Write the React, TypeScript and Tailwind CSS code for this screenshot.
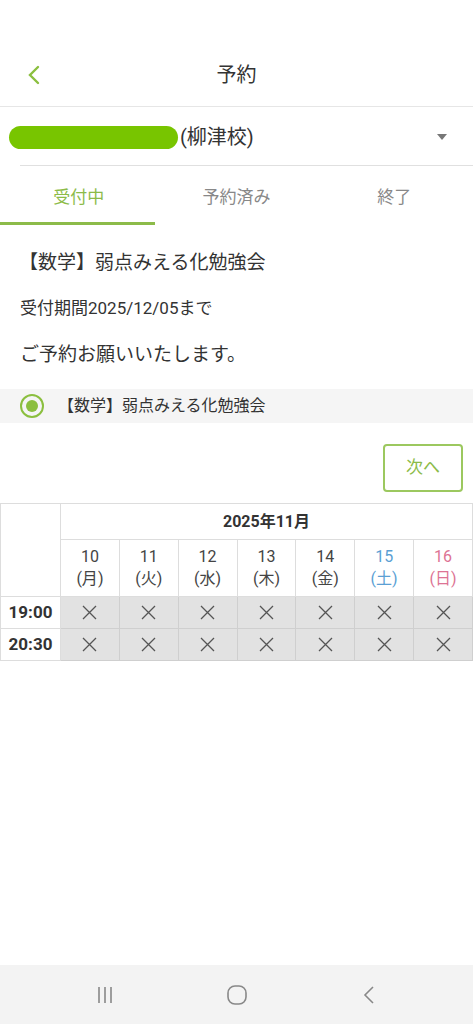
import React from "react";

const days = [
  { d: "10", w: "月", c: "text-[#444]" },
  { d: "11", w: "火", c: "text-[#444]" },
  { d: "12", w: "水", c: "text-[#444]" },
  { d: "13", w: "木", c: "text-[#444]" },
  { d: "14", w: "金", c: "text-[#444]" },
  { d: "15", w: "土", c: "text-[#5b9fd4]" },
  { d: "16", w: "日", c: "text-[#dd7394]" },
];

const times = ["19:00", "20:30"];

function Cross() {
  return (
    <svg width="17" height="17" viewBox="0 0 17 17" className="text-[#555]">
      <path d="M2 2L15 15M15 2L2 15" stroke="currentColor" strokeWidth="1.3" fill="none" />
    </svg>
  );
}

export default function App() {
  return (
    <div
      className="w-[473px] h-[1024px] bg-white flex flex-col text-[#333] overflow-hidden"
      style={{ fontFamily: "Roboto, 'Noto Sans CJK JP', sans-serif" }}
    >
      {/* Header */}
      <header className="h-[107px] flex items-end pb-[10px] border-b border-[#e6e6e6]">
        <div className="w-full h-[42px] flex items-center relative">
          <button className="absolute left-[24px] top-[9px]">
            <svg width="20" height="24" viewBox="0 0 20 24">
              <path d="M14 4L6 12L14 20" stroke="#8bbf3f" strokeWidth="2.4" fill="none" strokeLinecap="round" />
            </svg>
          </button>
          <h1 className="w-full text-center text-[20px] text-[#333]">予約</h1>
        </div>
      </header>

      {/* School selector */}
      <div className="h-[58px] flex items-center pl-[9px] pr-[26px] pt-[2px]">
        <div className="w-[169px] h-[23px] rounded-full bg-[#78c500]" />
        <span className="text-[20px] text-[#333] ml-[2px]">(柳津校)</span>
        <div className="ml-auto w-0 h-0 border-l-[5px] border-r-[5px] border-t-[6px] border-l-transparent border-r-transparent border-t-[#777]" />
      </div>
      <div className="ml-[20px] border-b border-[#e0e0e0]" />

      {/* Tabs */}
      <div className="h-[59px] grid grid-cols-3 text-[17px]">
        <div className="flex flex-col">
          <div className="flex-1 flex items-center justify-center pt-[8px] text-[#8cbb49]">受付中</div>
          <div className="h-[3px] bg-[#8cbb49] w-[155px]" />
        </div>
        <div className="flex items-center justify-center pt-[5px] text-[#888]">予約済み</div>
        <div className="flex items-center justify-center pt-[5px] text-[#888]">終了</div>
      </div>

      {/* Body */}
      <div className="pl-[19px] pt-[24px] text-[19px] leading-[28px]">【数学】弱点みえる化勉強会</div>
      <div className="pl-[20px] pt-[20px] text-[17px] leading-[22px]">受付期間2025/12/05まで</div>
      <div className="pl-[20px] pt-[22px] text-[19px] leading-[28px]">ご予約お願いいたします。</div>

      <div className="mt-[20px] h-[34px] bg-[#f5f5f5] flex items-center pl-[20px]">
        <div className="w-[24px] h-[24px] rounded-full border-2 border-[#8bbf3f] flex items-center justify-center">
          <div className="w-[12px] h-[12px] rounded-full bg-[#8bbf3f]" />
        </div>
        <span className="ml-[14px] text-[16px]">【数学】弱点みえる化勉強会</span>
      </div>

      <div className="flex justify-end pr-[10px] pt-[21px]">
        <button className="w-[80px] h-[48px] border-2 border-[#9cc85f] rounded-[4px] text-[#8cbb49] text-[17px]">
          次へ
        </button>
      </div>

      {/* Calendar */}
      <div className="mt-[11px]">
        <table className="border-collapse w-[473px] table-fixed">
          <colgroup>
            <col className="w-[60px]" />
            {days.map((d) => (
              <col key={d.d} />
            ))}
          </colgroup>
          <thead>
            <tr className="h-[36px]">
              <th rowSpan={2} className="border border-[#dddddd]" />
              <th colSpan={7} className="border border-[#dddddd] text-[16px] font-bold text-[#333]">
                2025年11月
              </th>
            </tr>
            <tr className="h-[57px]">
              {days.map((d) => (
                <th key={d.d} className={`border border-[#dddddd] font-normal text-[16px] leading-[22px] ${d.c}`}>
                  <div>{d.d}</div>
                  <div>({d.w})</div>
                </th>
              ))}
            </tr>
          </thead>
          <tbody>
            {times.map((t) => (
              <tr key={t} className="h-[32px]">
                <td className="border border-[#dddddd] text-center font-bold text-[17px] text-[#333]">{t}</td>
                {days.map((d) => (
                  <td key={d.d} className="border border-[#cfcfcf] bg-[#e2e2e2]">
                    <div className="flex items-center justify-center">
                      <Cross />
                    </div>
                  </td>
                ))}
              </tr>
            ))}
          </tbody>
        </table>
      </div>

      {/* Android nav bar */}
      <div className="mt-auto h-[59px] bg-[#f3f3f3] flex items-center justify-center gap-[111px]">
        <svg width="20" height="20" viewBox="0 0 20 20">
          <path d="M4 2V18M10 2V18M16 2V18" stroke="#888" strokeWidth="1.6" />
        </svg>
        <svg width="22" height="22" viewBox="0 0 22 22">
          <rect x="2" y="2" width="18" height="18" rx="7" stroke="#888" strokeWidth="1.6" fill="none" />
        </svg>
        <svg width="20" height="22" viewBox="0 0 20 22">
          <path d="M14 3L6 11L14 19" stroke="#888" strokeWidth="1.6" fill="none" />
        </svg>
      </div>
    </div>
  );
}
